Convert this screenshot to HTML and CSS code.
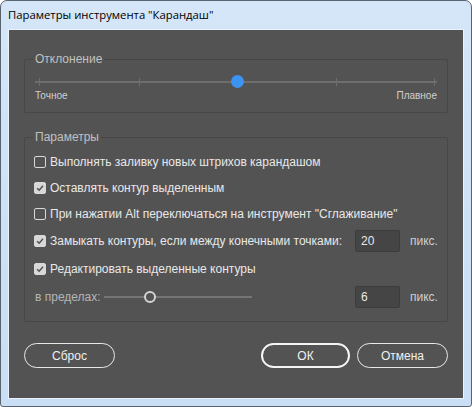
FILE: index.html
```html
<!DOCTYPE html>
<html lang="ru">
<head>
<meta charset="utf-8">
<link rel="stylesheet" href="styles.css">
</head>
<body>
<div class="window">
  <div class="titlebar">Параметры инструмента "Карандаш"</div>
  <div class="panel">
    <fieldset class="group group-dev">
      <legend>Отклонение</legend>
      <div class="slider">
        <div class="track"></div>
        <span class="tick" style="left:4px"></span>
        <span class="tick" style="left:104px"></span>
        <span class="tick" style="left:301px"></span>
        <span class="tick" style="left:399px"></span>
        <span class="knob" style="left:202px"></span>
      </div>
      <div class="slider-labels"><span>Точное</span><span>Плавное</span></div>
    </fieldset>

    <fieldset class="group group-params">
      <legend>Параметры</legend>
      <div class="row"><span class="cb"></span><span>Выполнять заливку новых штрихов карандашом</span></div>
      <div class="row"><span class="cb checked"><svg viewBox="0 0 12 12"><path d="M2.5 6.3 L5 8.6 L9.6 3.4" /></svg></span><span>Оставлять контур выделенным</span></div>
      <div class="row"><span class="cb"></span><span>При нажатии Alt переключаться на инструмент "Сглаживание"</span></div>
      <div class="row tall"><span class="cb checked"><svg viewBox="0 0 12 12"><path d="M2.5 6.3 L5 8.6 L9.6 3.4" /></svg></span><span class="grow">Замыкать контуры, если между конечными точками:</span><span class="input">20</span><span class="unit">пикс.</span></div>
      <div class="row tall"><span class="cb checked"><svg viewBox="0 0 12 12"><path d="M2.5 6.3 L5 8.6 L9.6 3.4" /></svg></span><span>Редактировать выделенные контуры</span></div>
      <div class="row tall"><span class="muted">в пределах:</span>
        <div class="mini-slider"><div class="mini-track"></div><span class="mini-knob" style="left:46px"></span></div>
        <span class="spacer"></span><span class="input">6</span><span class="unit">пикс.</span></div>
    </fieldset>

    <div class="buttons">
      <button class="btn btn-reset">Сброс</button>
      <span class="spacer"></span>
      <button class="btn btn-ok">ОК</button>
      <button class="btn btn-cancel">Отмена</button>
    </div>
  </div>
</div>
</body>
</html>
```
FILE: styles.css
```css
* { box-sizing: border-box; }
html, body { margin: 0; padding: 0; }
body {
  width: 472px;
  height: 407px;
  overflow: hidden;
  font-family: "Liberation Sans", sans-serif;
  background: #ffffff;
}
.window {
  width: 472px;
  height: 407px;
  border: 1px solid #5a6470;
  border-radius: 7px 7px 3px 3px;
  background: linear-gradient(180deg, #d5e6f8 0%, #cfe2f6 40%, #c9dff5 100%);
  padding: 0 7px 7px 7px;
  display: flex;
  flex-direction: column;
}
.titlebar {
  height: 28px;
  line-height: 28px;
  font-family: "Open Sans", "Liberation Sans", sans-serif;
  font-size: 11.3px;
  color: #000;
}
.panel {
  flex: 1;
  background: #535353;
  border: 1px solid #e9f1fa;
  display: flex;
  flex-direction: column;
  padding: 0 15px 0 15px;
  color: #e8e8e8;
  font-family: "Liberation Sans", sans-serif;
  font-size: 12px;
}
.group {
  margin: 0;
  border: 1px solid #474747;
  border-radius: 2px;
  padding: 0 10px;
}
.group legend {
  padding: 0 2px;
  margin-left: -2px;
  color: #c0c0c0;
  font-size: 12px;
  line-height: 14px;
}
.group-dev { margin-top: 22px; height: 61px; }
.group-params { margin-top: 17px; height: 192px; padding-top: 5px; }
.slider {
  position: relative;
  height: 14px;
  margin-top: 9px;
}
.track {
  position: absolute;
  left: 0; right: 0; top: 6px;
  height: 2px;
  background: #6e6e6e;
}
.tick {
  position: absolute;
  top: 3px;
  width: 1px;
  height: 8px;
  background: #6e6e6e;
}
.knob {
  position: absolute;
  top: 0;
  width: 13px;
  height: 13px;
  margin-left: -6px;
  border-radius: 50%;
  background: #3b93f2;
}
.slider-labels {
  display: flex;
  justify-content: space-between;
  font-size: 10px;
  color: #d0d0d0;
  margin-top: 1px;
}
.row {
  display: flex;
  align-items: center;
  height: 26px;
  white-space: nowrap;
}
.row.tall { height: 28px; }
.cb {
  width: 12px;
  height: 12px;
  border: 1px solid #d8d8d8;
  border-radius: 2px;
  margin: 0 4px 0 -1px;
  flex: none;
  display: flex;
}
.cb.checked { background: #d8d8d8; border-color: #d8d8d8; }
.cb svg { width: 10px; height: 10px; }
.cb svg path { fill: none; stroke: #535353; stroke-width: 1.8; }
.grow { flex: 1; }
.input {
  width: 45px;
  height: 22px;
  background: #454545;
  border: 1px solid #3c3c3c;
  border-radius: 2px;
  line-height: 20px;
  padding-left: 5px;
  color: #e8e8e8;
  font-size: 12px;
  flex: none;
}
.unit { width: 37px; padding-left: 10px; color: #cfcfcf; flex: none; }
.muted { color: #b5b5b5; }
.mini-slider { position: relative; width: 148px; height: 14px; margin-left: 3px; }
.mini-track { position: absolute; left: 0; right: 0; top: 6px; height: 2px; background: #757575; }
.mini-knob {
  position: absolute; top: 1px; width: 12px; height: 12px; margin-left: -6px;
  border-radius: 50%; border: 2px solid #d4d4d4; background: #535353;
}
.spacer { flex: 1; }
.buttons {
  display: flex;
  margin-top: 21px;
  gap: 7px;
}
.btn {
  height: 25px;
  width: 91px;
  border: 1.5px solid #e8e8e8;
  border-radius: 13px;
  background: transparent;
  color: #f0f0f0;
  font-family: "Liberation Sans", sans-serif;
  font-size: 12px;
  padding: 0;
}
.btn-ok { width: 89px; border-width: 2px; border-color: #f4f4f4; }
```
